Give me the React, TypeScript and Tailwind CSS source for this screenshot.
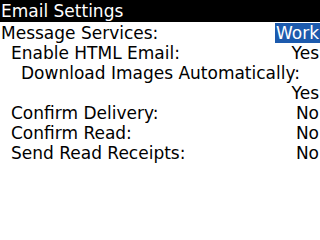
import React from "react";

export default function App() {
  return (
    <div
      className="w-[320px] h-[240px] bg-white text-black overflow-hidden"
      style={{ fontFamily: '"DejaVu Sans", sans-serif' }}
    >
      <div className="h-[22px] bg-black text-white text-[17px] leading-[22px] pl-[1px]">
        Email Settings
      </div>
      <div className="text-[17px] leading-[20px] pt-[1px]">
        <div className="flex justify-between pl-[1px]">
          <span>Message Services:</span>
          <span className="bg-[#1c5aad] text-white px-[1px]">Work</span>
        </div>
        <div className="flex justify-between pl-[11px] pr-[1px]">
          <span>Enable HTML Email:</span>
          <span>Yes</span>
        </div>
        <div className="pl-[21px]">Download Images Automatically:</div>
        <div className="flex justify-end pr-[1px]">
          <span>Yes</span>
        </div>
        <div className="flex justify-between pl-[11px] pr-[1px]">
          <span>Confirm Delivery:</span>
          <span>No</span>
        </div>
        <div className="flex justify-between pl-[11px] pr-[1px]">
          <span>Confirm Read:</span>
          <span>No</span>
        </div>
        <div className="flex justify-between pl-[11px] pr-[1px]">
          <span>Send Read Receipts:</span>
          <span>No</span>
        </div>
      </div>
    </div>
  );
}
